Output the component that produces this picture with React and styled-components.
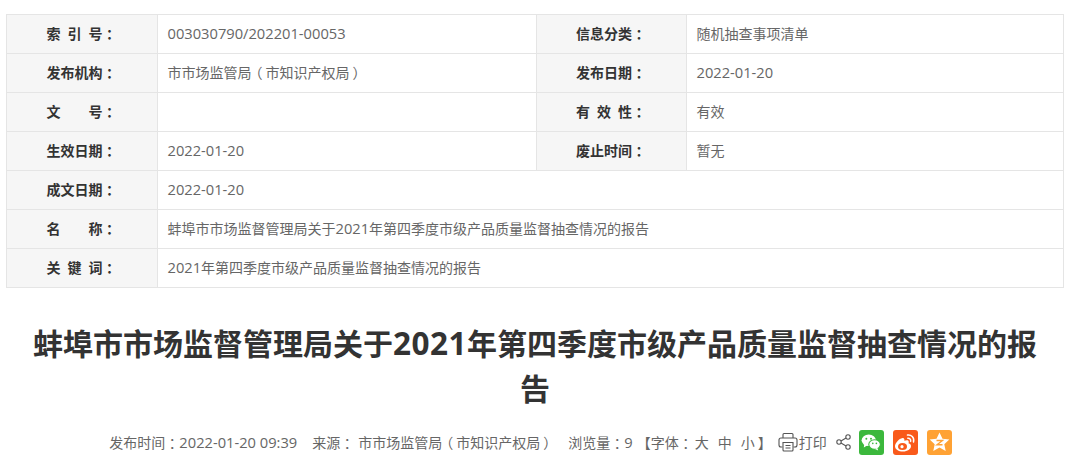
import React from "react"
import styled, { createGlobalStyle } from "styled-components"

const Global = createGlobalStyle`
  html, body {
    margin: 0;
    padding: 0;
    background: #fff;
  }
  body {
    font-family: "Open Sans", "Noto Sans CJK SC", sans-serif;
    color: #666;
    overflow: hidden;
  }
`

const Page = styled.div`
  width: 1077px;
  height: 455px;
  padding: 14px 13px 0 6px;
  box-sizing: border-box;
`

const Table = styled.table`
  width: 1057px;
  table-layout: fixed;
  border-collapse: collapse;
  border: 1px solid #e5e5e5;
`

const Num = styled.span`
  font-size: 1.05em;
`

const Punct = styled.span`
  display: inline-block;
  width: 1em;
  text-align: center;
  font-feature-settings: "palt";
`

const Label = styled.th`
  height: 39px;
  padding: 0 1px 2px 0;
  box-sizing: border-box;
  background: #f6f6f6;
  border: 1px solid #e5e5e5;
  font-size: 14px;
  font-weight: bold;
  color: #333;
  text-align: center;
  white-space: pre;
  word-spacing: 3.4px;
`

const Value = styled.td`
  height: 39px;
  padding: 0 10px 2px 9.5px;
  box-sizing: border-box;
  border: 1px solid #e5e5e5;
  font-size: 14px;
  color: #666;
`

const Title = styled.h1`
  margin: 32px 0 0;
  padding: 0 20px;
  font-size: 30px;
  line-height: 45px;
  font-weight: bold;
  color: #333;
  text-align: center;

  ${Num} {
    letter-spacing: 0.5px;
  }
`

const Meta = styled.div`
  display: flex;
  align-items: center;
  justify-content: center;
  margin-top: 18px;
  height: 26px;
  font-size: 14px;
  color: #666;
  white-space: pre;
`

const Item = styled.span`
  margin-right: ${(p) => p.$gap || 0}px;
`

const Print = styled.span`
  display: flex;
  align-items: center;
  gap: 1px;
`

const Share = styled.svg`
  margin: 0 8px 0 9px;
`

const Badge = styled.span`
  display: flex;
  align-items: center;
  justify-content: center;
  width: 25px;
  height: 25px;
  margin-right: 9px;
  border-radius: 3px;
  background: ${(p) => p.$bg};
`

const rows = [
  ["索 引 号：", "003030790/202201-00053", "信息分类：", "随机抽查事项清单"],
  ["发布机构：", "市市场监管局（市知识产权局）", "发布日期：", "2022-01-20"],
  ["文    号：", "", "有 效 性：", "有效"],
  ["生效日期：", "2022-01-20", "废止时间：", "暂无"],
  ["成文日期：", "2022-01-20"],
  ["名    称：", "蚌埠市市场监督管理局关于2021年第四季度市级产品质量监督抽查情况的报告"],
  ["关 键 词：", "2021年第四季度市级产品质量监督抽查情况的报告"],
]

// digits and full-width punctuation are drawn a bit differently from the hanzi
const Mixed = ({ text }) =>
  text.split(/([0-9][0-9\-:/ ]*[0-9]|[0-9]|[：（）])/).map((part, i) => {
    if (i % 2 === 0) return part
    if (/[：（）]/.test(part)) return <Punct key={i}>{part}</Punct>
    return <Num key={i}>{part}</Num>
  })

const PrintIcon = () => (
  <svg width="20" height="20" viewBox="0 0 20 20" fill="none" stroke="#555" strokeWidth="1.1">
    <path d="M5 6V2.500a1 1 0 0 1 1-1h8a1 1 0 0 1 1 1V6" />
    <path d="M4.500 15H3a2 2 0 0 1-2-2V8a2 2 0 0 1 2-2h14a2 2 0 0 1 2 2v5a2 2 0 0 1-2 2h-1.500" />
    <path d="M5 10.500h10V18a1 1 0 0 1-1 1H6a1 1 0 0 1-1-1z" />
    <path d="M7.500 13.500h5M7.500 16h5" />
  </svg>
)

const ShareIcon = () => (
  <Share width="15" height="16" viewBox="0 0 15 16" fill="none" stroke="#555" strokeWidth="1.1">
    <circle cx="3" cy="8" r="2.200" />
    <circle cx="12" cy="3" r="2.200" />
    <circle cx="12" cy="13" r="2.200" />
    <path d="M5 7 10 4.100M5 9l5 2.900" />
  </Share>
)

const WechatIcon = () => (
  <svg width="20" height="17" viewBox="0 0 22 19" fill="#fff">
    <ellipse cx="8.500" cy="7" rx="8" ry="6.500" />
    <path d="M3.500 11 3 15l4-2.500z" />
    <ellipse cx="15" cy="11.800" rx="6.500" ry="5.300" stroke="#3bb83c" strokeWidth="1.200" />
    <path d="M18 15.500l1 3-3.500-1.800z" />
    <circle cx="5.800" cy="5.200" r="1.100" fill="#3bb83c" />
    <circle cx="11" cy="5.200" r="1.100" fill="#3bb83c" />
    <circle cx="13" cy="10.500" r=".9" fill="#3bb83c" />
    <circle cx="17" cy="10.500" r=".9" fill="#3bb83c" />
  </svg>
)

const WeiboIcon = () => (
  <svg width="22" height="19" viewBox="0 0 22 19">
    <path
      fill="#fff"
      d="M9 18.500C4.600 18.500 1 16.300 1 13.200 1 10.200 5 5.400 8.500 4.900c1.800-.2 2.200 1.300 1.800 2.900 2.200-.9 4.300-.8 4.400.9.100.7-.1 1.200-.2 1.500 1.600.5 2.500 1.500 2.500 2.800 0 3.100-3.600 5.500-8 5.500z"
    />
    <ellipse cx="8.500" cy="13.500" rx="4.500" ry="3.500" fill="#f95a1b" />
    <circle cx="8" cy="13.700" r="1.600" fill="#fff" />
    <path d="M13.500 2c3.500-.6 7.200 2.400 6 7M13.800 5.200c1.700-.3 3.400 1.200 2.800 3.200" fill="none" stroke="#fff" strokeWidth="1.500" strokeLinecap="round" />
  </svg>
)

const StarIcon = () => (
  <svg width="21" height="20" viewBox="0 0 21 20">
    <path fill="#fff" d="M10.500 .5l3 6.300 6.800.8-5 4.600 1.400 6.800-6.200-3.400-6.200 3.400 1.400-6.800-5-4.600 6.800-.8z" />
    <path d="M7.500 8.500h6L8 12.800h5.500" fill="none" stroke="#ffa234" strokeWidth="1.400" />
  </svg>
)

const App = () => {
  return (
    <Page>
      <Global />
      <Table>
        <colgroup>
          <col width="151" />
          <col width="379" />
          <col width="150" />
          <col width="377" />
        </colgroup>
        <tbody>
          {rows.map((r) => (
            <tr key={r[0]}>
              <Label><Mixed text={r[0]} /></Label>
              {r.length === 2 ? (
                <Value colSpan={3}><Mixed text={r[1]} /></Value>
              ) : (
                <>
                  <Value><Mixed text={r[1]} /></Value>
                  <Label><Mixed text={r[2]} /></Label>
                  <Value><Mixed text={r[3]} /></Value>
                </>
              )}
            </tr>
          ))}
        </tbody>
      </Table>
      <Title><Mixed text="蚌埠市市场监督管理局关于2021年第四季度市级产品质量监督抽查情况的报告" /></Title>
      <Meta>
        <Item $gap={15}><Mixed text="发布时间：2022-01-20 09:39" /></Item>
        <Item $gap={4}><Mixed text="来源：" /></Item>
        <Item $gap={14}><Mixed text="市市场监管局（市知识产权局）" /></Item>
        <Item $gap={4}><Mixed text="浏览量：9" /></Item>
        <Item $gap={2}><Mixed text="【字体：" /></Item>
        <Item $gap={9}>大</Item>
        <Item $gap={9}>中</Item>
        <Item $gap={3}>小</Item>
        <Item $gap={6}>】</Item>
        <Print>
          <PrintIcon />
          打印
        </Print>
        <ShareIcon />
        <Badge $bg="#3bb83c"><WechatIcon /></Badge>
        <Badge $bg="#f95a1b"><WeiboIcon /></Badge>
        <Badge $bg="#ffa234"><StarIcon /></Badge>
      </Meta>
    </Page>
  )
}

export default App
